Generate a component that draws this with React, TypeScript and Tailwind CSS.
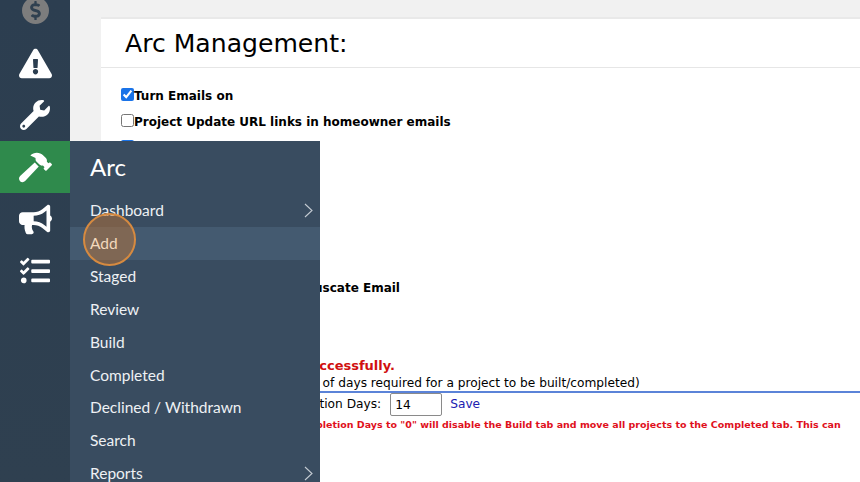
import { FaBullhorn, FaDollarSign, FaExclamationTriangle, FaHammer, FaTasks, FaWrench } from 'react-icons/fa'

const menuItems: { label: string; arrow?: boolean; active?: boolean }[] = [
  { label: 'Dashboard', arrow: true },
  { label: 'Add', active: true },
  { label: 'Staged' },
  { label: 'Review' },
  { label: 'Build' },
  { label: 'Completed' },
  { label: 'Declined / Withdrawn' },
  { label: 'Search' },
  { label: 'Reports', arrow: true },
]

function Sidebar() {
  return (
    <aside className="w-[70px] h-[482px] shrink-0 bg-gradient-to-b from-[#2c3e50] to-[#2f4050] flex flex-col items-center text-white">
      <div className="h-[37px] w-full flex justify-center -mt-[3px] mb-[3px]">
        <div className="w-[27px] h-[27px] rounded-full bg-[#7d7d7d] flex items-center justify-center text-[#2f4050]">
          <FaDollarSign className="w-[19px] h-[19px]" />
        </div>
      </div>
      <div className="h-[52px] w-full flex items-center justify-center">
        <FaExclamationTriangle className="w-[33px] h-[33px]" />
      </div>
      <div className="h-[52px] w-full flex items-center justify-center">
        <FaWrench className="w-[30px] h-[30px]" />
      </div>
      <div className="h-[52px] w-full flex items-center justify-center bg-[#2f8a4c]">
        <FaHammer className="w-[33px] h-[33px]" />
      </div>
      <div className="h-[52px] w-full flex items-center justify-center">
        <FaBullhorn className="w-[33px] h-[33px]" />
      </div>
      <div className="h-[52px] w-full flex items-center justify-center">
        <FaTasks className="w-[30px] h-[30px]" />
      </div>
    </aside>
  )
}

function FlyoutMenu() {
  return (
    <div className="absolute left-[70px] top-[141px] w-[250px] h-[341px] bg-[#394c60] text-[#eef1f4] font-['Lato',sans-serif] overflow-hidden">
      <div className="pl-5 pt-[9px] h-[53px] text-[24px] leading-[34px] text-white">Arc</div>
      {menuItems.map((item) => (
        <div
          key={item.label}
          className={`h-[32.95px] pl-5 pr-[7px] flex items-center justify-between text-[15.5px] ${item.active ? 'bg-[#445a70]' : ''}`}
        >
          <span className={item.active ? 'relative z-10 text-[#f3d9bd]' : ''}>{item.label}</span>
          {item.arrow && (
            <svg width="9" height="15" viewBox="0 0 9 15" fill="none" stroke="#c5ccd3" strokeWidth="1.1">
              <polyline points="1,1 8,7.5 1,14" />
            </svg>
          )}
        </div>
      ))}
    </div>
  )
}

export default function App() {
  return (
    <div className="relative w-[860px] h-[482px] overflow-hidden flex bg-[#f1f1f1] font-['DejaVu_Sans',sans-serif] text-black">
      <Sidebar />
      <main className="flex-1 pl-[31px] pt-[17px] min-w-0">
        <div className="bg-white h-[465px] border-t-2 border-[#e9e9e9] overflow-hidden">
          <h1 className="h-[49px] pl-6 pt-[7px] border-b border-[#e6e6e6] text-[25.1px] leading-[36px] whitespace-nowrap">Arc Management:</h1>
          <div className="pl-5 pt-[15px] text-[12px] font-bold leading-[26px] whitespace-nowrap">
            <label className="flex items-center h-[26px]">
              <input type="checkbox" defaultChecked className="w-[13px] h-[13px] mb-[3px] accent-[#1a73e8]" />
              <span>Turn Emails on</span>
            </label>
            <label className="flex items-center h-[26px]">
              <input type="checkbox" className="w-[13px] h-[13px] mb-[3px]" />
              <span>Project Update URL links in homeowner emails</span>
            </label>
            <label className="flex items-center h-[26px]">
              <input type="checkbox" defaultChecked className="w-[13px] h-[13px] mb-[3px] accent-[#1a73e8]" />
            </label>
            <div className="mt-[114px] h-[26px] pl-[169px]">Obfuscate Email</div>
          </div>
          <div className="mt-[56px] pl-[152px] text-[13px] font-bold leading-[18px] text-[#d01010] whitespace-nowrap">Saved successfully.</div>
          <div className="pl-[164px] text-[12.2px] leading-[16px] whitespace-nowrap">(Number of days required for a project to be built/completed)</div>
          <div className="border-t-2 border-[#5b83d8] pl-[172px] h-[25px] flex items-center text-[12.2px] whitespace-nowrap">
            <span>Completion Days:</span>
            <input defaultValue="14" className="ml-[9px] w-[52px] h-[23px] border border-[#8a8a8a] rounded-[2px] px-1 text-[12.2px] outline-none" />
            <span className="ml-2 text-[#2020b0]">Save</span>
          </div>
          <div className="pl-[149px] mt-[2px] text-[9.5px] font-bold leading-[14px] text-[#e0101c] whitespace-nowrap">Setting Completion Days to "0" will disable the Build tab and move all projects to the Completed tab. This can</div>
        </div>
      </main>
      <FlyoutMenu />
      <div className="absolute left-[83px] top-[213px] w-[53px] h-[53px] rounded-full border-2 border-[#d68a40] bg-[#c87832]/45" />
    </div>
  )
}
